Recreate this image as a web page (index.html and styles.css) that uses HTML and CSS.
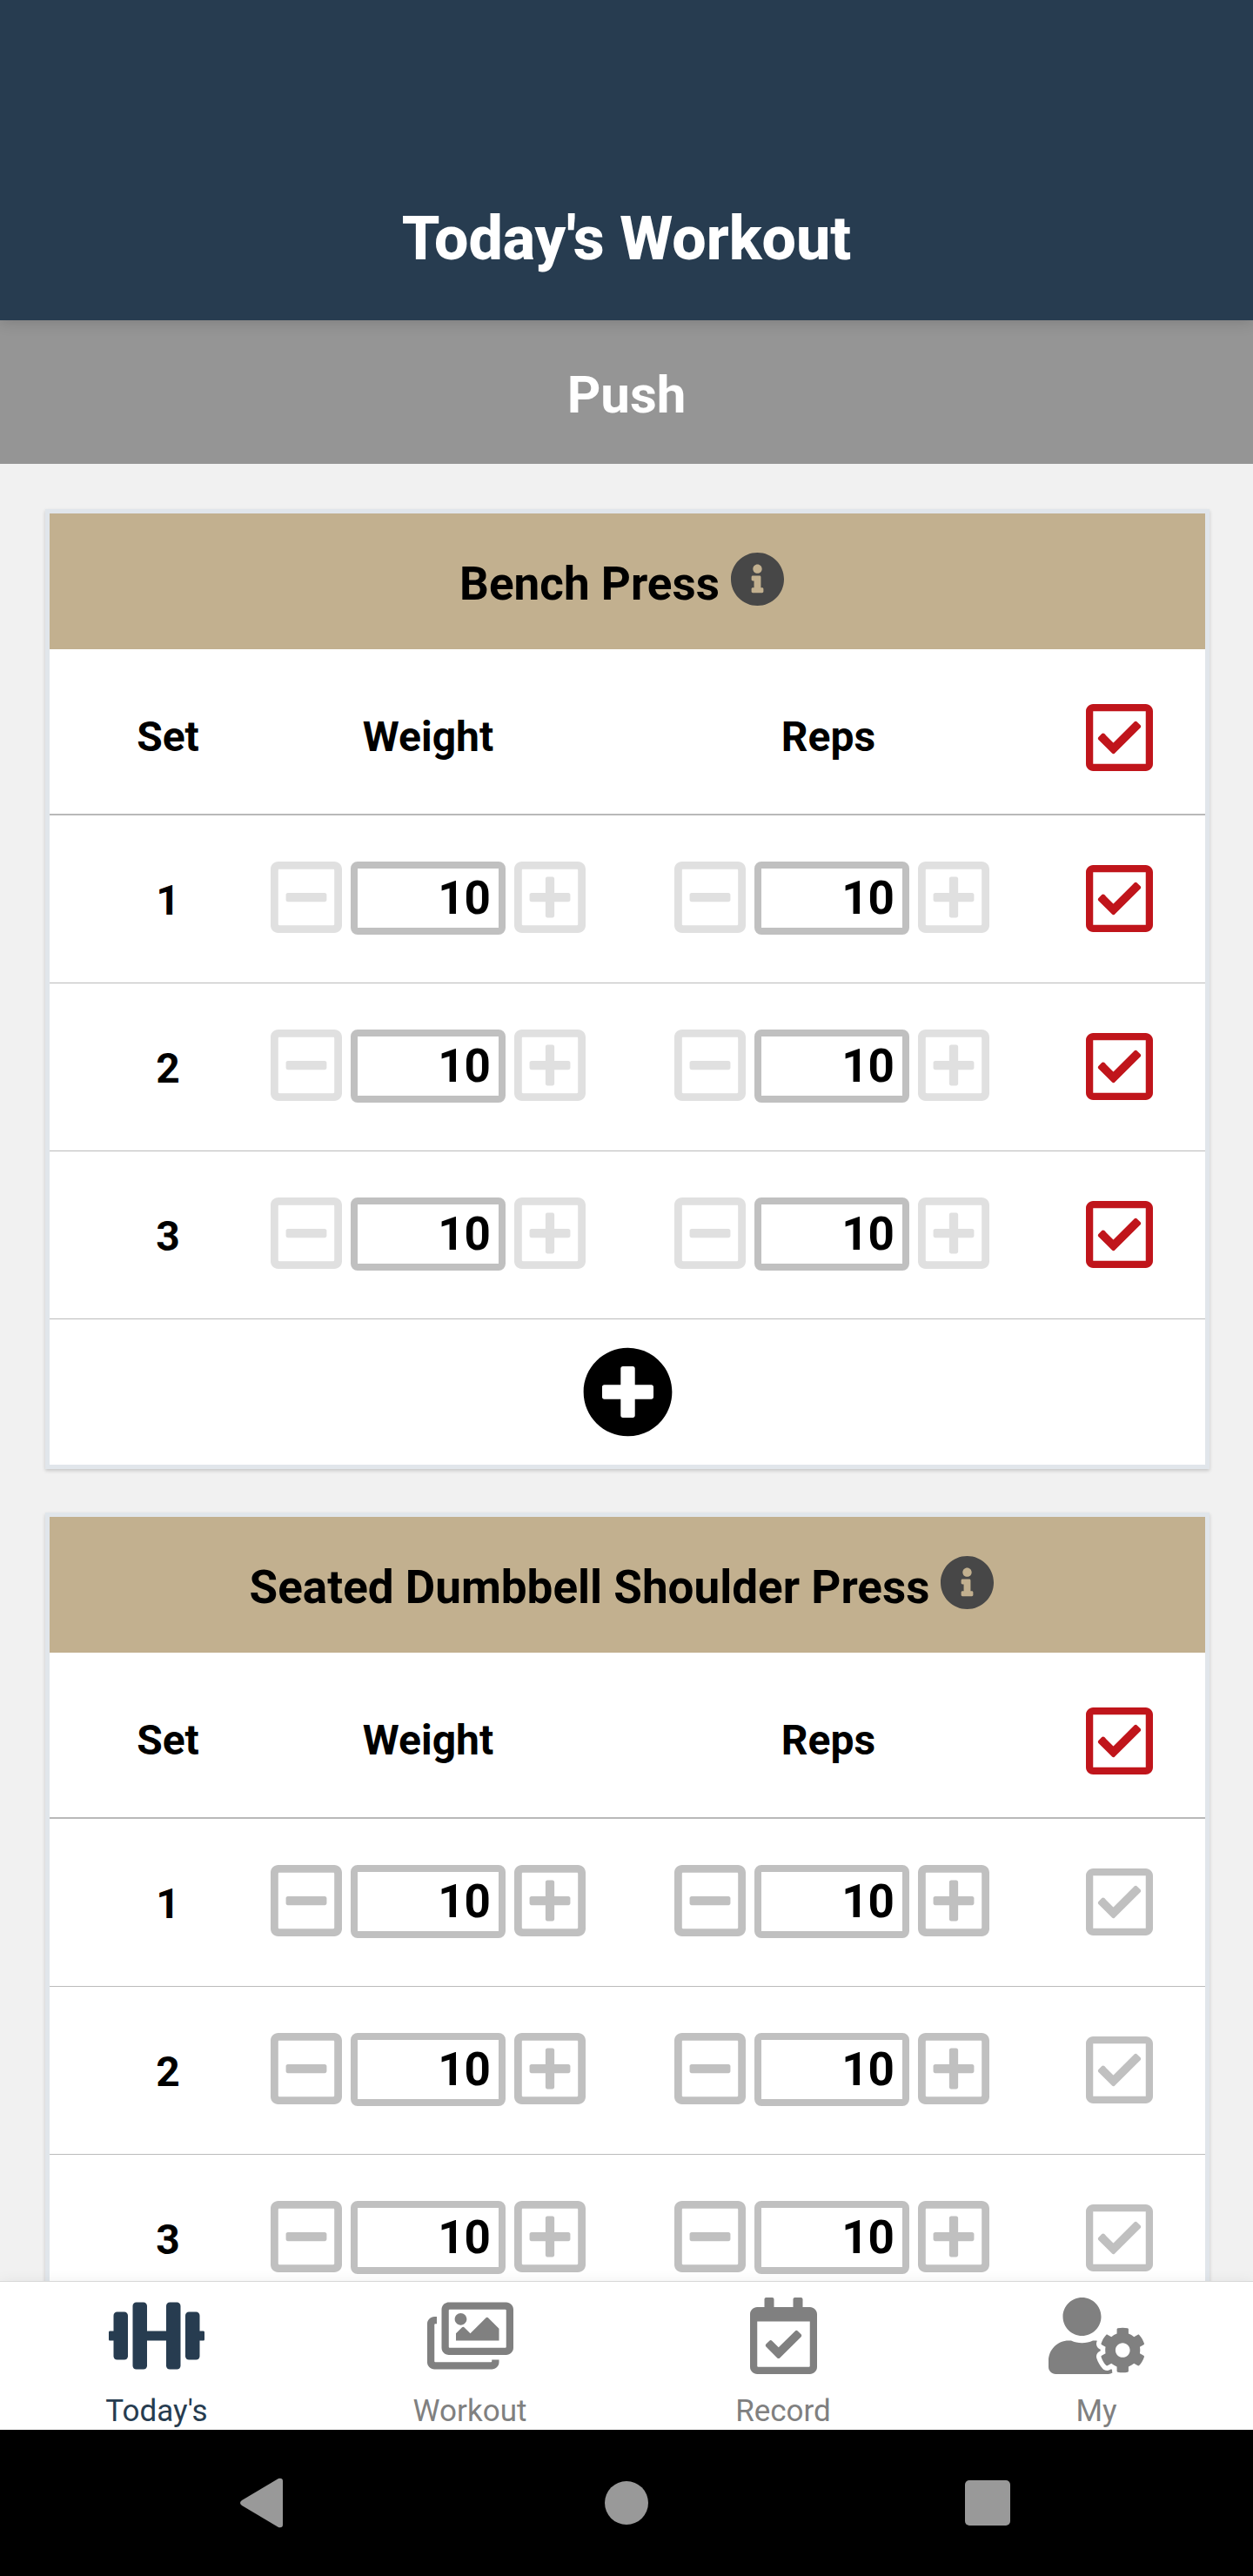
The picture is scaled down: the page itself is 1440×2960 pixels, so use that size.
FILE: index.html
```html
<!DOCTYPE html>
<html lang="en">
<head>
    <meta charset="UTF-8">
    <meta name="viewport" content="width=device-width, initial-scale=1.0">
    <title>Today's Workout</title>
    <link rel="stylesheet" href="styles.css">
</head>
<body>

    <!-- shared icons -->
    <svg class="icons" aria-hidden="true">
        <symbol id="minus" viewBox="0 32 448 448"><path d="M108 284c-6.600 0-12-5.400-12-12v-32c0-6.600 5.400-12 12-12h232c6.600 0 12 5.400 12 12v32c0 6.600-5.400 12-12 12H108zM448 80v352c0 26.500-21.500 48-48 48H48c-26.500 0-48-21.500-48-48V80c0-26.500 21.500-48 48-48h352c26.500 0 48 21.500 48 48zm-48 346V86c0-3.300-2.700-6-6-6H54c-3.300 0-6 2.700-6 6v340c0 3.300 2.700 6 6 6h340c3.300 0 6-2.700 6-6z"/></symbol>
        <symbol id="plus" viewBox="0 32 448 448"><path d="M352 240v32c0 6.600-5.400 12-12 12h-88v88c0 6.600-5.400 12-12 12h-32c-6.600 0-12-5.400-12-12v-88h-88c-6.600 0-12-5.400-12-12v-32c0-6.600 5.400-12 12-12h88v-88c0-6.600 5.400-12 12-12h32c6.600 0 12 5.400 12 12v88h88c6.600 0 12 5.400 12 12zm96-160v352c0 26.500-21.500 48-48 48H48c-26.500 0-48-21.500-48-48V80c0-26.500 21.500-48 48-48h352c26.500 0 48 21.500 48 48zm-48 346V86c0-3.300-2.700-6-6-6H54c-3.300 0-6 2.700-6 6v340c0 3.300 2.700 6 6 6h340c3.300 0 6-2.700 6-6z"/></symbol>
        <symbol id="check" viewBox="0 32 448 448"><path d="M400 32H48C21.490 32 0 53.490 0 80v352c0 26.510 21.490 48 48 48h352c26.510 0 48-21.490 48-48V80c0-26.510-21.490-48-48-48zm0 400H48V80h352v352zm-35.864-241.724L191.547 361.480c-4.705 4.667-12.303 4.637-16.970-.068l-90.781-91.516c-4.667-4.705-4.637-12.303.069-16.971l22.719-22.536c4.705-4.667 12.303-4.637 16.970.069l59.792 60.277 141.352-140.216c4.705-4.667 12.303-4.637 16.970.068l22.536 22.718c4.667 4.706 4.637 12.304-.068 16.971z"/></symbol>
        <symbol id="info" viewBox="0 0 512 512"><path d="M256 8C119.043 8 8 119.083 8 256c0 136.997 111.043 248 248 248s248-111.003 248-248C504 119.083 392.957 8 256 8zm0 110c23.196 0 42 18.804 42 42s-18.804 42-42 42-42-18.804-42-42 18.804-42 42-42zm56 254c0 6.627-5.373 12-12 12h-88c-6.627 0-12-5.373-12-12v-24c0-6.627 5.373-12 12-12h12v-64h-12c-6.627 0-12-5.373-12-12v-24c0-6.627 5.373-12 12-12h64c6.627 0 12 5.373 12 12v100h12c6.627 0 12 5.373 12 12v24z"/></symbol>
        <symbol id="add" viewBox="0 0 512 512"><path d="M256 8C119 8 8 119 8 256s111 248 248 248 248-111 248-248S393 8 256 8zm144 276c0 6.600-5.400 12-12 12h-92v92c0 6.600-5.400 12-12 12h-56c-6.600 0-12-5.400-12-12v-92h-92c-6.600 0-12-5.400-12-12v-56c0-6.600 5.400-12 12-12h92v-92c0-6.600 5.400-12 12-12h56c6.600 0 12 5.400 12 12v92h92c6.600 0 12 5.400 12 12v56z"/></symbol>
    </svg>

    <header>
        <h1>Today's Workout</h1>
    </header>

    <main>
        <p class="routine">Push</p>

        <div class="exercises">
            <section class="card">
                <div class="card-title">
                    <h2>Bench Press</h2>
                    <button class="info" aria-label="About Bench Press"><svg><use href="#info"/></svg></button>
                </div>
                <table>
                    <thead>
                        <tr>
                            <th class="set">Set</th>
                            <th>Weight</th>
                            <th class="reps">Reps</th>
                            <th class="done"><label class="tick"><input type="checkbox" aria-label="All sets done" checked><svg><use href="#check"/></svg></label></th>
                        </tr>
                    </thead>
                    <tbody>
                        <tr>
                            <td class="set">1</td>
                            <td>
                                <div class="stepper">
                                    <button aria-label="Less weight" disabled><svg><use href="#minus"/></svg></button>
                                    <input type="text" inputmode="numeric" aria-label="Weight" value="10">
                                    <button aria-label="More weight" disabled><svg><use href="#plus"/></svg></button>
                                </div>
                            </td>
                            <td>
                                <div class="stepper">
                                    <button aria-label="Fewer reps" disabled><svg><use href="#minus"/></svg></button>
                                    <input type="text" inputmode="numeric" aria-label="Reps" value="10">
                                    <button aria-label="More reps" disabled><svg><use href="#plus"/></svg></button>
                                </div>
                            </td>
                            <td class="done"><label class="tick"><input type="checkbox" aria-label="Set 1 done" checked><svg><use href="#check"/></svg></label></td>
                        </tr>
                        <tr>
                            <td class="set">2</td>
                            <td>
                                <div class="stepper">
                                    <button aria-label="Less weight" disabled><svg><use href="#minus"/></svg></button>
                                    <input type="text" inputmode="numeric" aria-label="Weight" value="10">
                                    <button aria-label="More weight" disabled><svg><use href="#plus"/></svg></button>
                                </div>
                            </td>
                            <td>
                                <div class="stepper">
                                    <button aria-label="Fewer reps" disabled><svg><use href="#minus"/></svg></button>
                                    <input type="text" inputmode="numeric" aria-label="Reps" value="10">
                                    <button aria-label="More reps" disabled><svg><use href="#plus"/></svg></button>
                                </div>
                            </td>
                            <td class="done"><label class="tick"><input type="checkbox" aria-label="Set 2 done" checked><svg><use href="#check"/></svg></label></td>
                        </tr>
                        <tr>
                            <td class="set">3</td>
                            <td>
                                <div class="stepper">
                                    <button aria-label="Less weight" disabled><svg><use href="#minus"/></svg></button>
                                    <input type="text" inputmode="numeric" aria-label="Weight" value="10">
                                    <button aria-label="More weight" disabled><svg><use href="#plus"/></svg></button>
                                </div>
                            </td>
                            <td>
                                <div class="stepper">
                                    <button aria-label="Fewer reps" disabled><svg><use href="#minus"/></svg></button>
                                    <input type="text" inputmode="numeric" aria-label="Reps" value="10">
                                    <button aria-label="More reps" disabled><svg><use href="#plus"/></svg></button>
                                </div>
                            </td>
                            <td class="done"><label class="tick"><input type="checkbox" aria-label="Set 3 done" checked><svg><use href="#check"/></svg></label></td>
                        </tr>
                    </tbody>
                </table>
                <button class="add-set" aria-label="Add set"><svg><use href="#add"/></svg></button>
            </section>

            <section class="card">
                <div class="card-title">
                    <h2>Seated Dumbbell Shoulder Press</h2>
                    <button class="info" aria-label="About Seated Dumbbell Shoulder Press"><svg><use href="#info"/></svg></button>
                </div>
                <table>
                    <thead>
                        <tr>
                            <th class="set">Set</th>
                            <th>Weight</th>
                            <th class="reps">Reps</th>
                            <th class="done"><label class="tick"><input type="checkbox" aria-label="All sets done" checked><svg><use href="#check"/></svg></label></th>
                        </tr>
                    </thead>
                    <tbody>
                        <tr>
                            <td class="set">1</td>
                            <td>
                                <div class="stepper">
                                    <button aria-label="Less weight"><svg><use href="#minus"/></svg></button>
                                    <input type="text" inputmode="numeric" aria-label="Weight" value="10">
                                    <button aria-label="More weight"><svg><use href="#plus"/></svg></button>
                                </div>
                            </td>
                            <td>
                                <div class="stepper">
                                    <button aria-label="Fewer reps"><svg><use href="#minus"/></svg></button>
                                    <input type="text" inputmode="numeric" aria-label="Reps" value="10">
                                    <button aria-label="More reps"><svg><use href="#plus"/></svg></button>
                                </div>
                            </td>
                            <td class="done"><label class="tick"><input type="checkbox" aria-label="Set 1 done"><svg><use href="#check"/></svg></label></td>
                        </tr>
                        <tr>
                            <td class="set">2</td>
                            <td>
                                <div class="stepper">
                                    <button aria-label="Less weight"><svg><use href="#minus"/></svg></button>
                                    <input type="text" inputmode="numeric" aria-label="Weight" value="10">
                                    <button aria-label="More weight"><svg><use href="#plus"/></svg></button>
                                </div>
                            </td>
                            <td>
                                <div class="stepper">
                                    <button aria-label="Fewer reps"><svg><use href="#minus"/></svg></button>
                                    <input type="text" inputmode="numeric" aria-label="Reps" value="10">
                                    <button aria-label="More reps"><svg><use href="#plus"/></svg></button>
                                </div>
                            </td>
                            <td class="done"><label class="tick"><input type="checkbox" aria-label="Set 2 done"><svg><use href="#check"/></svg></label></td>
                        </tr>
                        <tr>
                            <td class="set">3</td>
                            <td>
                                <div class="stepper">
                                    <button aria-label="Less weight"><svg><use href="#minus"/></svg></button>
                                    <input type="text" inputmode="numeric" aria-label="Weight" value="10">
                                    <button aria-label="More weight"><svg><use href="#plus"/></svg></button>
                                </div>
                            </td>
                            <td>
                                <div class="stepper">
                                    <button aria-label="Fewer reps"><svg><use href="#minus"/></svg></button>
                                    <input type="text" inputmode="numeric" aria-label="Reps" value="10">
                                    <button aria-label="More reps"><svg><use href="#plus"/></svg></button>
                                </div>
                            </td>
                            <td class="done"><label class="tick"><input type="checkbox" aria-label="Set 3 done"><svg><use href="#check"/></svg></label></td>
                        </tr>
                    </tbody>
                </table>
            </section>
        </div>
    </main>

    <nav class="tabs">
        <a href="#today" class="active">
            <svg viewBox="0 0 640 512"><path d="M104 96H56c-13.300 0-24 10.700-24 24v104H8c-4.400 0-8 3.600-8 8v48c0 4.400 3.600 8 8 8h24v104c0 13.300 10.700 24 24 24h48c13.300 0 24-10.700 24-24V120c0-13.300-10.700-24-24-24zm528 128h-24V120c0-13.300-10.700-24-24-24h-48c-13.300 0-24 10.700-24 24v272c0 13.300 10.700 24 24 24h48c13.300 0 24-10.700 24-24V288h24c4.400 0 8-3.600 8-8v-48c0-4.400-3.600-8-8-8zM456 32h-48c-13.300 0-24 10.700-24 24v168H256V56c0-13.300-10.700-24-24-24h-48c-13.300 0-24 10.700-24 24v400c0 13.300 10.700 24 24 24h48c13.300 0 24-10.700 24-24V288h128v168c0 13.300 10.700 24 24 24h48c13.300 0 24-10.700 24-24V56c0-13.300-10.700-24-24-24z"/></svg>
            <span>Today's</span>
        </a>
        <a href="#workout">
            <svg viewBox="0 0 576 512"><path d="M480 416v16c0 26.510-21.490 48-48 48H48c-26.510 0-48-21.490-48-48V176c0-26.510 21.490-48 48-48h16v48H54a6 6 0 0 0-6 6v244a6 6 0 0 0 6 6h372a6 6 0 0 0 6-6v-10h48zm42-336H150a6 6 0 0 0-6 6v244a6 6 0 0 0 6 6h372a6 6 0 0 0 6-6V86a6 6 0 0 0-6-6zm6-48c26.510 0 48 21.490 48 48v256c0 26.510-21.490 48-48 48H144c-26.510 0-48-21.490-48-48V80c0-26.510 21.490-48 48-48h384zM264 144c0 22.091-17.909 40-40 40s-40-17.909-40-40 17.909-40 40-40 40 17.909 40 40zm-72 96l39.515-39.515c4.686-4.686 12.284-4.686 16.971 0L288 240l103.515-103.515c4.686-4.686 12.284-4.686 16.971 0L480 208v80H192v-48z"/></svg>
            <span>Workout</span>
        </a>
        <a href="#record">
            <svg viewBox="0 0 448 512"><path d="M400 64h-48V12c0-6.627-5.373-12-12-12h-40c-6.627 0-12 5.373-12 12v52H160V12c0-6.627-5.373-12-12-12h-40c-6.627 0-12 5.373-12 12v52H48C21.490 64 0 85.490 0 112v352c0 26.510 21.490 48 48 48h352c26.510 0 48-21.490 48-48V112c0-26.510-21.490-48-48-48zm-6 400H54a6 6 0 0 1-6-6V160h352v298a6 6 0 0 1-6 6zm-52.849-200.650L198.842 404.519c-4.705 4.667-12.303 4.637-16.971-.068l-75.091-75.699c-4.667-4.705-4.637-12.303.068-16.971l22.719-22.536c4.705-4.667 12.303-4.637 16.970.069l44.104 44.461 111.072-110.181c4.705-4.667 12.303-4.637 16.971.068l22.536 22.718c4.667 4.705 4.636 12.303-.069 16.970z"/></svg>
            <span>Record</span>
        </a>
        <a href="#my">
            <svg viewBox="0 0 640 512"><path d="M610.500 373.300c2.600-14.100 2.600-28.500 0-42.600l25.800-14.900c3-1.700 4.300-5.200 3.300-8.500-6.700-21.600-18.200-41.200-33.200-57.400-2.300-2.500-6-3.100-9-1.400l-25.800 14.900c-10.900-9.300-23.400-16.500-36.900-21.300v-29.800c0-3.400-2.400-6.400-5.700-7.100-22.300-5-45-4.800-66.200 0-3.300.7-5.700 3.700-5.700 7.100v29.800c-13.500 4.800-26 12-36.900 21.300l-25.800-14.900c-2.900-1.700-6.700-1.100-9 1.400-15 16.200-26.500 35.800-33.200 57.400-1 3.300.4 6.800 3.300 8.500l25.800 14.900c-2.600 14.100-2.600 28.500 0 42.600l-25.800 14.900c-3 1.700-4.300 5.200-3.300 8.500 6.700 21.600 18.200 41.100 33.200 57.400 2.300 2.500 6 3.100 9 1.400l25.800-14.900c10.900 9.300 23.400 16.500 36.900 21.300v29.800c0 3.400 2.400 6.400 5.700 7.100 22.300 5 45 4.800 66.200 0 3.300-.7 5.700-3.700 5.700-7.100v-29.800c13.500-4.800 26-12 36.900-21.300l25.800 14.900c2.900 1.700 6.700 1.100 9-1.400 15-16.200 26.500-35.800 33.200-57.400 1-3.300-.4-6.800-3.300-8.500l-25.800-14.900zM496 400.500c-26.800 0-48.500-21.800-48.500-48.500s21.800-48.500 48.500-48.500 48.500 21.800 48.500 48.500-21.700 48.500-48.500 48.500zM224 256c70.700 0 128-57.300 128-128S294.700 0 224 0 96 57.300 96 128s57.300 128 128 128zm201.200 226.500c-2.300-1.200-4.600-2.600-6.800-3.900l-7.900 4.600c-6 3.400-12.800 5.300-19.600 5.300-10.900 0-21.400-4.600-28.900-12.600-18.300-19.800-32.300-43.900-40.200-69.600-5.500-17.700 1.900-36.400 17.900-45.700l7.900-4.600c-.1-2.600-.1-5.200 0-7.800l-7.900-4.600c-16-9.200-23.400-28-17.900-45.700.9-2.900 2.200-5.800 3.200-8.700-3.800-.3-7.500-1.200-11.400-1.200h-16.700c-22.200 10.200-46.900 16-72.900 16s-50.600-5.800-72.900-16h-16.700C60.200 288 0 348.200 0 422.400V464c0 26.500 21.500 48 48 48h352c10.100 0 19.500-3.200 27.200-8.500-1.200-3.800-2-7.700-2-11.800v-9.200z"/></svg>
            <span>My</span>
        </a>
    </nav>

    <div class="system-bar">
        <button aria-label="Back"><svg viewBox="0 0 64 64"><path d="M9 29L51 4q5-1 5 3v50q0 4-5 3L9 35q-4-3 0-6z"/></svg></button>
        <button aria-label="Home"><svg viewBox="0 0 64 64"><circle cx="32" cy="32" r="25"/></svg></button>
        <button aria-label="Recent apps"><svg viewBox="0 0 64 64"><rect x="2" y="6" width="52" height="52" rx="5"/></svg></button>
    </div>

</body>
</html>
```

FILE: styles.css
```css
*{
    margin: 0;
    padding: 0;
    box-sizing: border-box;
}

body{
    display: flex;
    flex-direction: column;
    height: 100vh;
    background-color: #f1f1f1;
    color: black;
    font-family: Roboto, "Liberation Sans", sans-serif;
    overflow: hidden;
}

svg{
    display: block;
    fill: currentColor;
}

button{
    border: none;
    background: none;
    color: inherit;
    cursor: pointer;
}

.icons{
    display: none;
}

header{
    position: relative;
    z-index: 1;
    flex: none;
    padding: 233px 0 53px;
    background-color: #273c50;
    color: white;
    text-align: center;
    box-shadow: 0 2px 16px rgba(0,0,0,0.16);
}

h1{
    font-size: 70px;
    line-height: 82px;
    font-weight: 800;
}

main{
    flex: 1;
    min-height: 0;
    overflow: hidden;
}

.routine{
    padding: 51px 0 44px;
    background-color: #959595;
    color: white;
    font-size: 60px;
    line-height: 70px;
    font-weight: 700;
    text-align: center;
}

.exercises{
    display: flex;
    flex-direction: column;
    gap: 50px;
    padding: 52px 50px 50px 52px;
}

.card{
    border: 5px solid #e1e6eb;
    background-color: white;
    box-shadow: 0 2px 4px rgba(0,0,0,0.18);
}

.card-title{
    display: flex;
    justify-content: center;
    align-items: center;
    gap: 12px;
    height: 156px;
    padding-right: 12px;
    background-color: #c2b08f;
}

h2{
    padding-top: 6px;
    font-size: 53px;
    line-height: 62px;
    font-weight: 700;
}

.info{
    padding-bottom: 6px;
    color: #474747;
}

.info svg{
    width: 63px;
    height: 63px;
}

table{
    width: 100%;
    table-layout: fixed;
    border-collapse: separate;
    border-spacing: 0;
    font-size: 48px;
    line-height: 56px;
    font-weight: 700;
    text-align: center;
}

th{
    height: 191px;
    padding-top: 13px;
    border-bottom: 2px solid #b9b9b9;
}

td{
    height: 193px;
    padding-bottom: 2px;
    border-bottom: 1px solid #bbb;
    vertical-align: middle;
}

.set{
    width: 203px;
    padding-left: 69px;
}

td.set{
    padding-top: 6px;
}

.reps{
    padding-right: 8px;
}

.done{
    width: 197px;
}

.stepper{
    display: flex;
    justify-content: center;
    align-items: flex-start;
    gap: 10px;
    color: #c0c0c0;
}

.stepper svg{
    width: 82px;
    height: 82px;
}

.stepper button:disabled{
    color: #e0e0e0;
}

.stepper input{
    width: 178px;
    height: 84px;
    padding-right: 9px;
    border: 8px solid #c0c0c0;
    border-radius: 8px;
    background-color: white;
    color: black;
    font: 700 53px Roboto, "Liberation Sans", sans-serif;
    text-align: right;
}

.tick{
    position: relative;
    display: block;
    width: 77px;
    margin: 0 auto;
    cursor: pointer;
}

.tick input{
    position: absolute;
    inset: 0;
    width: 100%;
    height: 100%;
    opacity: 0;
}

.tick svg{
    width: 77px;
    height: 77px;
    color: #c0c0c0;
}

.tick input:checked + svg{
    color: #c0151b;
}

.add-set{
    display: flex;
    justify-content: center;
    align-items: center;
    width: 100%;
    height: 167px;
}

.add-set svg{
    width: 105px;
    height: 105px;
}

.tabs{
    position: relative;
    display: flex;
    flex: none;
    padding: 18px 0 1px;
    border-top: 1px solid #d8d8d8;
    background-color: white;
    box-shadow: 0 0 16px rgba(0,0,0,0.06);
}

.tabs a{
    display: flex;
    flex: 1;
    flex-direction: column;
    align-items: center;
    gap: 22px;
    color: #808080;
    font-size: 35px;
    line-height: 41px;
    text-decoration: none;
}

.tabs a.active{
    color: #273c50;
}

.tabs svg{
    height: 88px;
}

.system-bar{
    position: relative;
    display: grid;
    grid-template-columns: repeat(3, 1fr);
    align-items: center;
    flex: none;
    height: 168px;
    padding: 0 92px;
    background-color: black;
    color: #999;
}

.system-bar button{
    display: flex;
    justify-content: center;
}

.system-bar svg{
    width: 64px;
    height: 64px;
}
```
